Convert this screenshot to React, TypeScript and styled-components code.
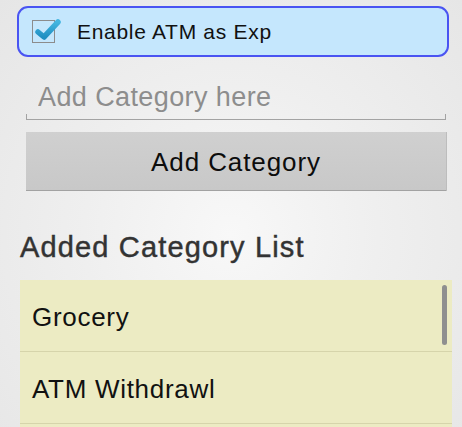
import React from 'react'
import styled, { createGlobalStyle } from 'styled-components'

const GlobalStyle = createGlobalStyle`
    html, body {
        margin: 0;
        padding: 0;
        height: 100%;
    }
    body {
        font-family: "Liberation Sans", Arial, sans-serif;
        background: radial-gradient(ellipse at 50% 55%, #f8f8f8 0%, #efefef 45%, #e6e6e6 100%);
        overflow: hidden;
    }
`;

export const Page = styled.div`
    display: flex;
    flex-direction: column;
    height: 427px;
    width: 462px;
    box-sizing: border-box;
    padding-top: 6px;
`;

export const ToggleBox = styled.label`
    display: flex;
    align-items: center;
    gap: 22px;
    height: 51px;
    margin: 0 13px 0 17px;
    padding-left: 13px;
    box-sizing: border-box;
    background: #c5e7fd;
    border: 2px solid #4a54f2;
    border-radius: 11px;
    cursor: pointer;
`;

export const CheckBox = styled.span`
    position: relative;
    width: 23px;
    height: 23px;
    box-sizing: border-box;
    border: 1px solid #8c8c8c;
    flex-shrink: 0;

    svg {
        position: absolute;
        left: 1px;
        top: -5px;
    }
`;

export const ToggleLabel = styled.span`
    font-size: 21px;
    letter-spacing: 0.7px;
    color: #111;
`;

export const FieldRow = styled.div`
    position: relative;
    margin: 18px 16px 0 26px;
    height: 44px;
    border-bottom: 1px solid #a3a3a3;

    &::before, &::after {
        content: '';
        position: absolute;
        bottom: -1px;
        width: 1px;
        height: 6px;
        background: #a3a3a3;
    }
    &::before { left: 0; }
    &::after { right: 0; }
`;

export const CategoryInput = styled.input`
    width: 100%;
    height: 100%;
    box-sizing: border-box;
    border: none;
    outline: none;
    background: transparent;
    padding: 0 0 0 12px;
    font-family: "Liberation Sans", Arial, sans-serif;
    font-size: 27px;
    letter-spacing: 0.4px;
    color: #222;

    &::placeholder {
        color: #8d8d8d;
    }
`;

export const AddButton = styled.button`
    margin: 12px 16px 0 26px;
    height: 59px;
    border: none;
    border-bottom: 1px solid #a2a2a2;
    box-shadow: 1px 0 0 #bdbdbd;
    background: linear-gradient(#d0d0d0, #c8c8c8);
    font-family: "Liberation Sans", Arial, sans-serif;
    font-size: 26px;
    letter-spacing: 0.9px;
    color: #0c0c0c;
    padding: 3px 0 0;
`;

export const SectionTitle = styled.h2`
    margin: 39px 0 0 20px;
    font-size: 29px;
    line-height: 35px;
    font-weight: normal;
    letter-spacing: 1.15px;
    color: #333;
    -webkit-text-stroke: 0.45px #333;
`;

export const List = styled.div`
    position: relative;
    flex: 1;
    margin: 15px 10px 0 20px;
    background: #ecebc3;
    overflow: hidden;
`;

export const ListRow = styled.div`
    height: 71px;
    line-height: 74px;
    padding-left: 12px;
    border-bottom: 1px solid #d6d4ab;
    font-size: 26px;
    letter-spacing: 0.7px;
    color: #111;
`;

export const ScrollThumb = styled.div`
    position: absolute;
    top: 5px;
    right: 5px;
    width: 5px;
    height: 60px;
    border-radius: 3px;
    background: #8f8f8f;
`;

const categories = ['Grocery', 'ATM Withdrawl']

function CheckMark() {
    return (
        <svg width="28" height="24" viewBox="0 0 28 24">
            <defs>
                <linearGradient id="tick" x1="0" y1="0" x2="0" y2="1">
                    <stop offset="0" stopColor="#45b6e0" />
                    <stop offset="1" stopColor="#1f8fc2" />
                </linearGradient>
            </defs>
            <path
                d="M4 16 L10 21 L24 6"
                fill="none"
                stroke="url(#tick)"
                strokeWidth="5.5"
                strokeLinecap="round"
                strokeLinejoin="round"
            />
        </svg>
    )
}

export default function App() {
    return (
        <>
            <GlobalStyle />
            <Page>
                <ToggleBox>
                    <CheckBox>
                        <CheckMark />
                    </CheckBox>
                    <ToggleLabel>Enable ATM as Exp</ToggleLabel>
                </ToggleBox>
                <FieldRow>
                    <CategoryInput placeholder="Add Category here" />
                </FieldRow>
                <AddButton>Add Category</AddButton>
                <SectionTitle>Added Category List</SectionTitle>
                <List>
                    {categories.map((c) => (
                        <ListRow key={c}>{c}</ListRow>
                    ))}
                    <ScrollThumb />
                </List>
            </Page>
        </>
    )
}
